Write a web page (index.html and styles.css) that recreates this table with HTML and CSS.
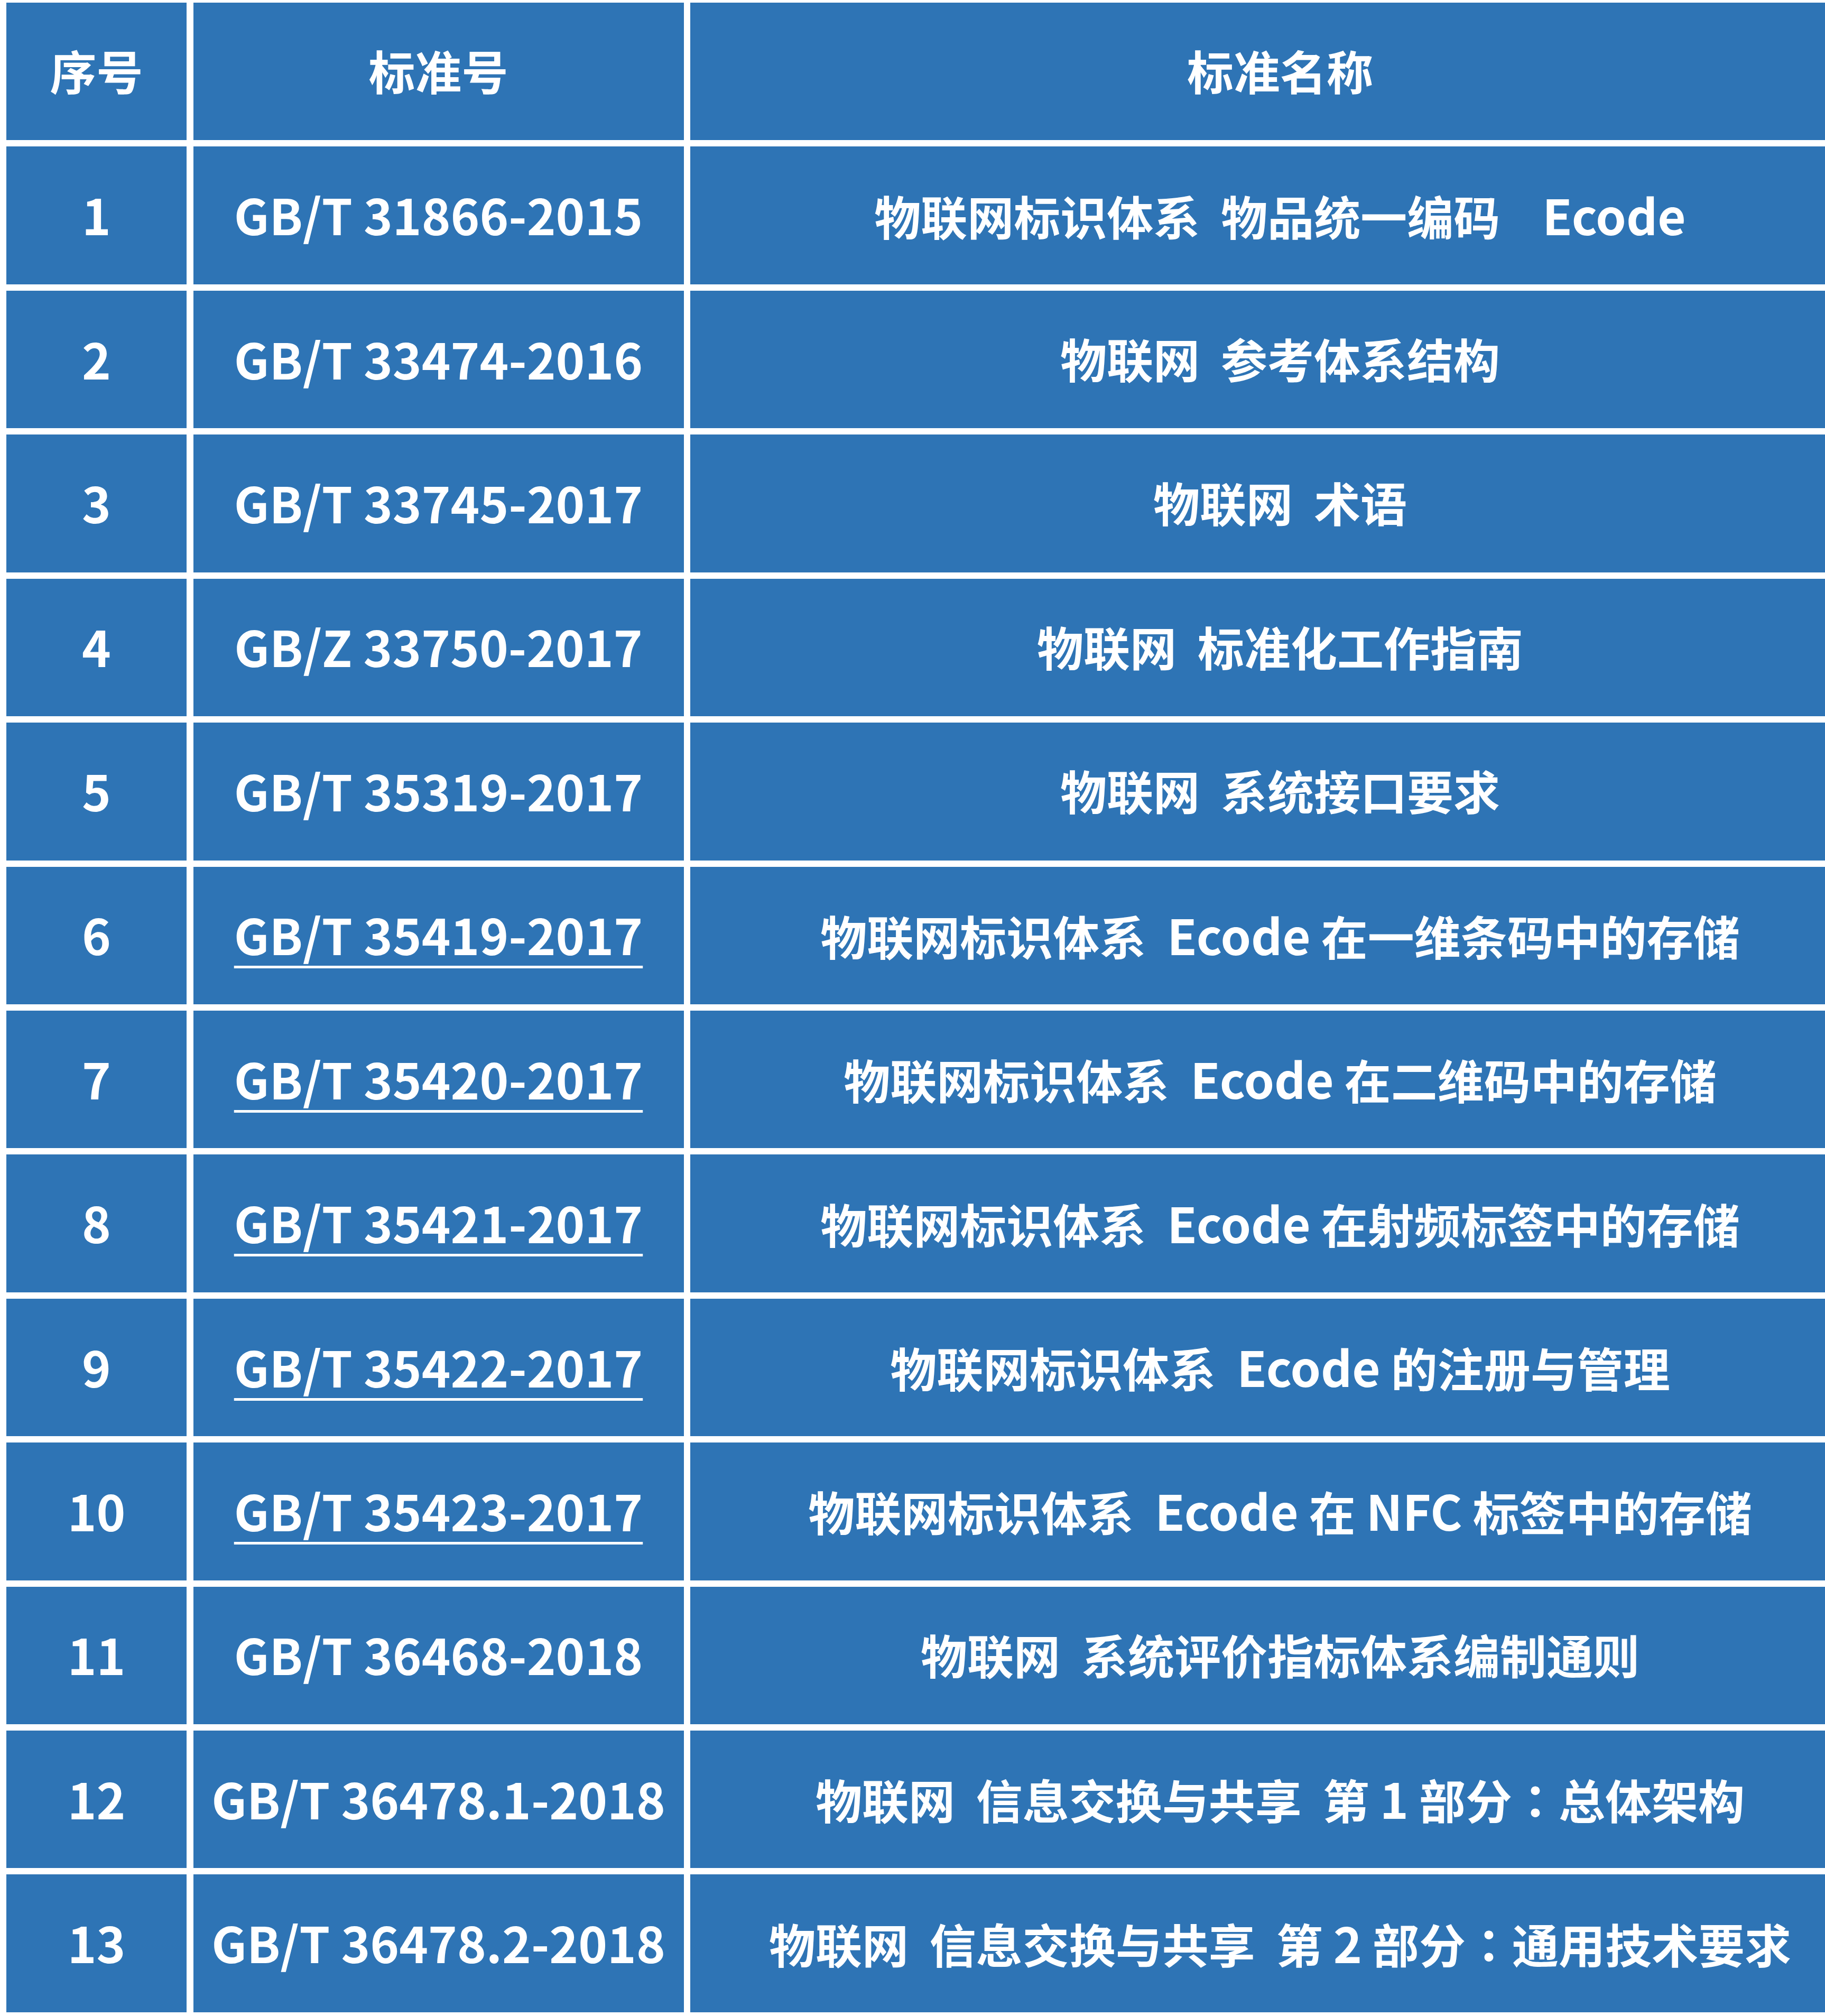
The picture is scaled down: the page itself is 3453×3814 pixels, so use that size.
FILE: index.html
```html
<!DOCTYPE html>
<html lang="zh-CN">
<head>
<meta charset="utf-8">
<title>物联网标准列表</title>
<link rel="stylesheet" href="styles.css">
</head>
<body>
<div class="table">
  <div class="cell head">序号</div>
  <div class="cell head">标准号</div>
  <div class="cell head">标准名称</div>

  <div class="cell num">1</div>
  <div class="cell code">GB/T 31866-2015</div>
  <div class="cell"><span>物联网标识体系&nbsp;&nbsp;物品统一编码&nbsp;&nbsp;&nbsp;&nbsp;<span class="en">Ecode</span></span></div>

  <div class="cell num">2</div>
  <div class="cell code">GB/T 33474-2016</div>
  <div class="cell"><span>物联网&nbsp;&nbsp;参考体系结构</span></div>

  <div class="cell num">3</div>
  <div class="cell code">GB/T 33745-2017</div>
  <div class="cell"><span>物联网&nbsp;&nbsp;术语</span></div>

  <div class="cell num">4</div>
  <div class="cell code">GB/Z 33750-2017</div>
  <div class="cell"><span>物联网&nbsp;&nbsp;标准化工作指南</span></div>

  <div class="cell num">5</div>
  <div class="cell code">GB/T 35319-2017</div>
  <div class="cell"><span>物联网&nbsp;&nbsp;系统接口要求</span></div>

  <div class="cell num">6</div>
  <div class="cell code"><span class="link">GB/T 35419-2017</span></div>
  <div class="cell"><span>物联网标识体系&nbsp;&nbsp;<span class="en">Ecode</span> 在一维条码中的存储</span></div>

  <div class="cell num">7</div>
  <div class="cell code"><span class="link">GB/T 35420-2017</span></div>
  <div class="cell"><span>物联网标识体系&nbsp;&nbsp;<span class="en">Ecode</span> 在二维码中的存储</span></div>

  <div class="cell num">8</div>
  <div class="cell code"><span class="link">GB/T 35421-2017</span></div>
  <div class="cell"><span>物联网标识体系&nbsp;&nbsp;<span class="en">Ecode</span> 在射频标签中的存储</span></div>

  <div class="cell num">9</div>
  <div class="cell code"><span class="link">GB/T 35422-2017</span></div>
  <div class="cell"><span>物联网标识体系&nbsp;&nbsp;<span class="en">Ecode</span> 的注册与管理</span></div>

  <div class="cell num">10</div>
  <div class="cell code"><span class="link">GB/T 35423-2017</span></div>
  <div class="cell"><span>物联网标识体系&nbsp;&nbsp;<span class="en">Ecode</span> 在 <span class="en">NFC</span> 标签中的存储</span></div>

  <div class="cell num">11</div>
  <div class="cell code">GB/T 36468-2018</div>
  <div class="cell"><span>物联网&nbsp;&nbsp;系统评价指标体系编制通则</span></div>

  <div class="cell num">12</div>
  <div class="cell code">GB/T 36478.1-2018</div>
  <div class="cell"><span>物联网&nbsp;&nbsp;信息交换与共享&nbsp;&nbsp;第 <span class="en">1</span> 部分<span class="colon" lang="zh-TW">：</span>总体架构</span></div>

  <div class="cell num">13</div>
  <div class="cell code">GB/T 36478.2-2018</div>
  <div class="cell"><span>物联网&nbsp;&nbsp;信息交换与共享&nbsp;&nbsp;第 <span class="en">2</span> 部分<span class="colon" lang="zh-TW">：</span>通用技术要求</span></div>
</div>
</body>
</html>
```
FILE: styles.css
```css
html, body {
  margin: 0;
  padding: 0;
  background: #ffffff;
  overflow: hidden;
}

.table {
  display: grid;
  grid-template-columns: 341px 928px 2232px;
  grid-template-rows: repeat(14, 260.43px);
  column-gap: 12.5px;
  row-gap: 12px;
  padding: 5px 0 0 12px;
  width: max-content;
}

.cell {
  background: #2e74b5;
  color: #ffffff;
  font-family: "Noto Sans CJK SC", "Noto Sans", sans-serif;
  font-weight: 700;
  font-size: 88px;
  display: flex;
  align-items: center;
  justify-content: center;
  white-space: nowrap;
  line-height: 1;
  padding-bottom: 6px;
  box-sizing: border-box;
}

.num,
.code {
  font-size: 93px;
}

.en {
  font-size: 92px;
}

.colon {
  font-family: "Noto Sans CJK TC", "Noto Sans CJK SC", sans-serif;
}

.link {
  text-decoration: underline;
  text-decoration-thickness: 5px;
  text-underline-offset: 20px;
}
```
